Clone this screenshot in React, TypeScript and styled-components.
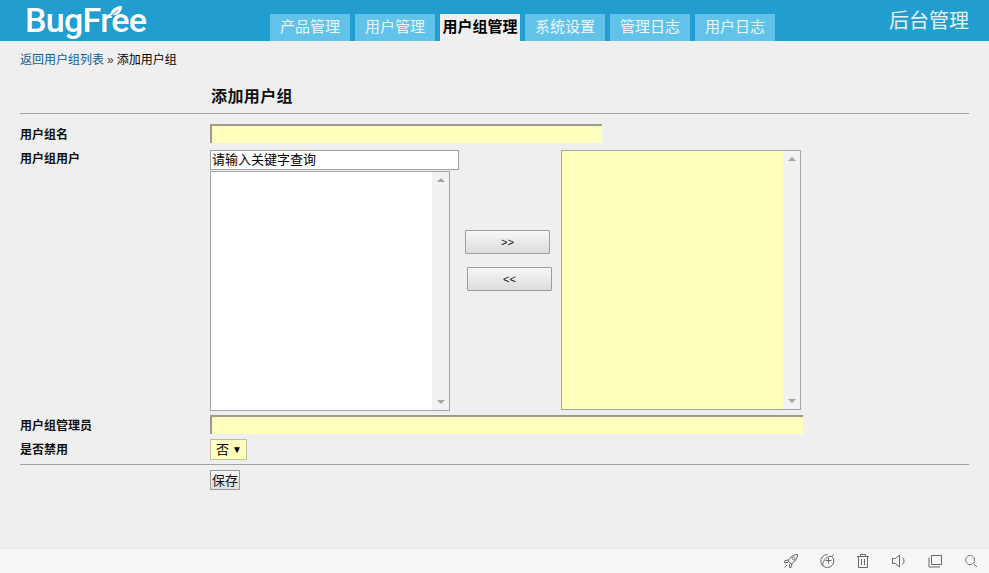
import React from "react";
import styled, { createGlobalStyle } from "styled-components";

const Global = createGlobalStyle`
  html, body { margin: 0; padding: 0; background: #efefef; }
  body { font-family: "Liberation Sans", "Noto Sans CJK SC", sans-serif; font-size: 12px; color: #000; }
  * { box-sizing: border-box; }
`;

const Page = styled.div`
  width: 989px;
  height: 573px;
  display: flex;
  flex-direction: column;
  overflow: hidden;
`;

const Header = styled.header`
  height: 42px;
  flex: none;
  display: flex;
  align-items: flex-end;
  background: #229dcf;
  border-bottom: 1px solid #e6f3f8;
  padding-left: 24px;
  padding-right: 20px;
`;

const LogoBox = styled.div`
  position: relative;
  width: 246px;
  height: 41px;
  flex: none;
`;

const LogoText = styled.span`
  position: absolute;
  left: 1px;
  top: 0;
  font-family: Roboto, "Liberation Sans", sans-serif;
  font-weight: 500;
  font-size: 34px;
  line-height: 40px;
  letter-spacing: -0.7px;
  color: #fff;
`;

const Leaf = styled.svg`
  position: absolute;
  left: 85px;
  top: 5px;
`;

const Tabs = styled.nav`
  display: flex;
  gap: 5px;
`;

const Tab = styled.a<{ $active?: boolean }>`
  width: 80px;
  height: 27px;
  padding-bottom: 2px;
  display: flex;
  align-items: center;
  justify-content: center;
  font-size: 15px;
  line-height: 20px;
  font-weight: ${(p) => (p.$active ? 700 : 400)};
  color: ${(p) => (p.$active ? "#000" : "#eaf7fc")};
  background: ${(p) => (p.$active ? "#efefef" : "#62c3ea")};
`;

const AdminTitle = styled.div`
  margin-left: auto;
  align-self: center;
  font-size: 20px;
  line-height: 40px;
  color: #e3f4fb;
`;

const Main = styled.main`
  flex: 1;
  padding: 0 20px;
`;

const Crumbs = styled.div`
  height: 35px;
  padding-top: 10px;
  line-height: 17px;
  font-size: 12px;
`;

const CrumbLink = styled.a`
  color: #0e5c98;
`;

const Sep = styled.span`
  color: #533;
  margin: 0 3px;
`;

const FormHead = styled.div`
  height: 37px;
  padding: 9px 0 0 191px;
  border-bottom: 1px solid #a3a3a3;
`;

const FormTitle = styled.h2`
  margin: 0;
  font-size: 16px;
  line-height: 22px;
  font-weight: 700;
  color: #111;
  letter-spacing: 0.4px;
`;

const Row = styled.div<{ $top: number }>`
  display: grid;
  grid-template-columns: 190px 1fr;
  margin-top: ${(p) => p.$top}px;
`;

const Label = styled.label<{ $pt?: number }>`
  font-size: 12px;
  font-weight: 700;
  line-height: 15px;
  padding-top: ${(p) => p.$pt ?? 4}px;
  color: #111;
`;

const YellowInput = styled.div<{ $w: number; $h: number }>`
  width: ${(p) => p.$w}px;
  height: ${(p) => p.$h}px;
  background: #ffffbd;
  border-top: 2px solid #9c9c8e;
  border-left: 2px solid #9c9c8e;
`;

const Transfer = styled.div`
  display: flex;
  align-items: flex-start;
  height: 262px;
`;

const LeftCol = styled.div`
  width: 255px;
  flex: none;
  display: flex;
  flex-direction: column;
  gap: 1px;
`;

const SearchInput = styled.div`
  width: 249px;
  height: 20px;
  background: #fff;
  border: 1px solid #a0a0a0;
  padding-left: 1px;
  font-size: 13px;
  line-height: 18px;
`;

const ListBox = styled.div<{ $yellow?: boolean; $h: number }>`
  width: 240px;
  height: ${(p) => p.$h}px;
  display: flex;
  border: 1px solid #a5a5a5;
  background: ${(p) => (p.$yellow ? "#ffffbd" : "#fff")};
`;

const ListBody = styled.div`
  flex: 1;
`;

const Scroll = styled.div`
  width: 17px;
  background: #f1f1f1;
  display: flex;
  flex-direction: column;
  justify-content: space-between;
  align-items: center;
  padding: 6px 0;
`;

const Arrow = styled.span<{ $down?: boolean }>`
  width: 0;
  height: 0;
  border-left: 4px solid transparent;
  border-right: 4px solid transparent;
  ${(p) => (p.$down ? "border-top: 4px solid #a3a3a3;" : "border-bottom: 4px solid #a3a3a3;")}
`;

const MoveCol = styled.div`
  width: 96px;
  flex: none;
  display: flex;
  flex-direction: column;
  align-items: flex-start;
  padding-top: 80px;
  gap: 13px;
`;

const MoveButton = styled.button<{ $shift?: number }>`
  width: 85px;
  height: 24px;
  margin: 0 0 0 ${(p) => p.$shift ?? 0}px;
  padding: 0;
  border: 1px solid #9d9d9d;
  border-radius: 1px;
  background: linear-gradient(#f7f7f7, #dcdcdc);
  font-family: "Liberation Sans", sans-serif;
  font-size: 11px;
  color: #111;
`;

const SelectBox = styled.div`
  width: 37px;
  height: 21px;
  background: #ffffbd;
  border: 1px solid #bdbda8;
  display: flex;
  align-items: center;
  padding-left: 5px;
  gap: 3px;
  font-size: 13px;
  line-height: 18px;
`;

const Caret = styled.span`
  font-size: 10px;
  line-height: 12px;
`;

const Divider = styled.div`
  height: 1px;
  background: #a3a3a3;
  margin-top: 4px;
`;

const SaveRow = styled.div`
  padding: 5px 0 0 190px;
`;

const SaveButton = styled.button`
  width: 30px;
  height: 20px;
  padding: 0;
  border: 1px solid #9a9a9a;
  background: linear-gradient(#f6f6f6, #dedede);
  font-family: "Liberation Sans", "Noto Sans CJK SC", sans-serif;
  font-size: 13px;
  line-height: 17px;
  color: #111;
`;

const Footer = styled.footer`
  height: 25px;
  flex: none;
  background: #f6f6f6;
  border-top: 1px solid #ececec;
  display: flex;
  justify-content: flex-end;
  align-items: center;
  gap: 20px;
  padding-right: 10px;
`;

const FootIcon = styled.svg<{ $light?: boolean }>`
  width: 16px;
  height: 16px;
  fill: none;
  stroke: ${(p) => (p.$light ? "#777" : "#666")};
  stroke-width: 1;
  flex: none;
`;

const tabs: [string, boolean?][] = [
  ["产品管理"],
  ["用户管理"],
  ["用户组管理", true],
  ["系统设置"],
  ["管理日志"],
  ["用户日志"],
];

export default function App() {
  return (
    <Page>
      <Global />
      <Header>
        <LogoBox>
          <LogoText>BugFree</LogoText>
          <Leaf width="14" height="13" viewBox="0 0 14 13">
            <path d="M1 12 C1 5 6 1 13 1 C13 7 9 11 3 10 Z" fill="#fff" />
            <path d="M2 11 L9 5" stroke="#229dcf" strokeWidth="1" fill="none" />
          </Leaf>
        </LogoBox>
        <Tabs>
          {tabs.map(([t, a]) => (
            <Tab key={t} $active={a}>
              {t}
            </Tab>
          ))}
        </Tabs>
        <AdminTitle>后台管理</AdminTitle>
      </Header>
      <Main>
        <Crumbs>
          <CrumbLink>返回用户组列表</CrumbLink>
          <Sep>»</Sep>
          添加用户组
        </Crumbs>
        <FormHead>
          <FormTitle>添加用户组</FormTitle>
        </FormHead>
        <Row $top={10}>
          <Label>用户组名</Label>
          <YellowInput $w={392} $h={19} />
        </Row>
        <Row $top={7}>
          <Label $pt={2}>用户组用户</Label>
          <Transfer>
            <LeftCol>
              <SearchInput>请输入关键字查询</SearchInput>
              <ListBox $h={240}>
                <ListBody />
                <Scroll>
                  <Arrow />
                  <Arrow $down />
                </Scroll>
              </ListBox>
            </LeftCol>
            <MoveCol>
              <MoveButton>&gt;&gt;</MoveButton>
              <MoveButton $shift={2}>&lt;&lt;</MoveButton>
            </MoveCol>
            <ListBox $yellow $h={260}>
              <ListBody />
              <Scroll>
                <Arrow />
                <Arrow $down />
              </Scroll>
            </ListBox>
          </Transfer>
        </Row>
        <Row $top={3}>
          <Label>用户组管理员</Label>
          <YellowInput $w={593} $h={19} />
        </Row>
        <Row $top={5}>
          <Label>是否禁用</Label>
          <SelectBox>
            否<Caret>▼</Caret>
          </SelectBox>
        </Row>
        <Divider />
        <SaveRow>
          <SaveButton>保存</SaveButton>
        </SaveRow>
      </Main>
      <Footer>
        <FootIcon viewBox="0 0 16 16">
          <path d="M14.5 1.5 C10.5 1.5 7 4 5 8 L8 11 C12 9 14.5 5.5 14.5 1.5 Z M5.5 7 L2 7.5 L1.5 9.5 L5 9.5 M9 10.5 L8.5 14 L6.5 14.5 L6.5 11 M4 12 L1.5 14.5 M10.5 4 a1.5 1.5 0 1 0 .1 0" />
        </FootIcon>
        <FootIcon viewBox="0 0 16 16">
          <path d="M13 3.5 A6.5 6.5 0 1 1 8.5 1.5 M13 3.5 L14.5 1.5 M13 3.5 C9 2.5 4 6 3.5 13 M9.5 4.5 V10.5 M6.5 7.5 H12.5" />
        </FootIcon>
        <FootIcon viewBox="0 0 16 16">
          <path d="M2 3.5 H14 M5.5 3.5 V1.5 H10.5 V3.5 M3.5 3.5 V14.5 H12.5 V3.5 M6.5 6 V12 M9.5 6 V12" />
        </FootIcon>
        <FootIcon viewBox="0 0 16 16">
          <path d="M1.5 5.5 H4.5 L8.5 2 V14 L4.5 10.5 H1.5 Z M11.5 4.5 C13.5 6.5 13.5 9.5 11.5 11.5" />
        </FootIcon>
        <FootIcon viewBox="0 0 16 16">
          <path d="M4.5 2.5 H14.5 V11.5 H4.5 Z M2 4.5 V14 H13" />
        </FootIcon>
        <FootIcon viewBox="0 0 16 16" $light>
          <path d="M7 2.5 a4.5 4.5 0 1 0 .1 0 M10.5 10.5 L14 14" />
        </FootIcon>
      </Footer>
    </Page>
  );
}
